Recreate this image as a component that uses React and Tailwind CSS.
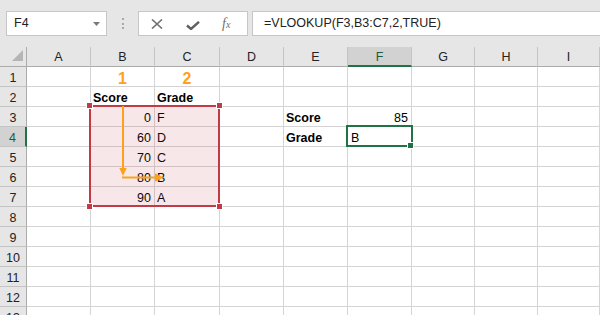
import React from 'react';

const COLS = ['A', 'B', 'C', 'D', 'E', 'F', 'G', 'H', 'I'];
const COL_W = ['w-[64px]', 'w-[64px]', 'w-[65px]', 'w-[64px]', 'w-[64px]', 'w-[64px]', 'w-[63px]', 'w-[63px]', 'w-[62px]'];
const ROWS = [1, 2, 3, 4, 5, 6, 7, 8, 9, 10, 11, 12, 13];

// cell contents keyed by "B3" style refs
const CELLS = {
    B1: { text: '1', kind: 'orange' },
    C1: { text: '2', kind: 'orange' },
    B2: { text: 'Score', kind: 'bold' },
    C2: { text: 'Grade', kind: 'bold' },
    B3: { text: '0', kind: 'num' }, C3: { text: 'F' },
    B4: { text: '60', kind: 'num' }, C4: { text: 'D' },
    B5: { text: '70', kind: 'num' }, C5: { text: 'C' },
    B6: { text: '80', kind: 'num' }, C6: { text: 'B' },
    B7: { text: '90', kind: 'num' }, C7: { text: 'A' },
    E3: { text: 'Score', kind: 'bold' },
    F3: { text: '85', kind: 'num' },
    E4: { text: 'Grade', kind: 'bold' },
    F4: { text: 'B', kind: 'sel' },
};

const cellText = (cell) => {
    if (!cell) return null;
    if (cell.kind === 'orange') {
        return <span className="w-full text-center text-[16px] font-bold text-[#fda11a] leading-[15px]">{cell.text}</span>;
    }
    if (cell.kind === 'num') {
        return <span className="w-full text-right pr-[3px]">{cell.text}</span>;
    }
    if (cell.kind === 'bold') {
        return <span className="pl-[2px] font-bold">{cell.text}</span>;
    }
    if (cell.kind === 'sel') {
        return <span className="pl-[3px]">{cell.text}</span>;
    }
    return <span className="pl-[2px]">{cell.text}</span>;
};

const Toolbar = () => (
    <div className="h-[47px] bg-[#e6e6e6] flex items-start pt-[11px] pl-[6px] overflow-hidden">
        <div className="shrink-0 w-[101px] h-[25px] bg-white border border-[#c6c6c6] flex items-center justify-between pl-[7px] pr-[6px]">
            <span className="text-[12.5px] text-[#222]">F4</span>
            <svg width="7" height="4" viewBox="0 0 7 4"><polygon points="0,0 7,0 3.5,4" fill="#7a7a7a" /></svg>
        </div>
        <div className="shrink-0 w-[31px] h-[25px] flex flex-col items-center justify-center gap-[2.5px] pl-[1px]">
            <div className="w-[2px] h-[2px] bg-[#a8a8a8]"></div>
            <div className="w-[2px] h-[2px] bg-[#a8a8a8]"></div>
            <div className="w-[2px] h-[2px] bg-[#a8a8a8]"></div>
        </div>
        <div className="shrink-0 w-[110px] h-[25px] bg-white border border-[#c6c6c6] flex items-center">
            <svg className="ml-[12px]" width="12" height="10" viewBox="0 0 12 10">
                <path d="M1 0.5 L11 9.5 M11 0.5 L1 9.5" stroke="#707070" strokeWidth="1.6" fill="none" />
            </svg>
            <svg className="ml-[23px] mt-[3px]" width="14" height="9" viewBox="0 0 14 9">
                <path d="M1 4.5 L5 8 L13 0.8" stroke="#606060" strokeWidth="2.4" fill="none" />
            </svg>
            <span className="ml-[22px] text-[14px] italic text-[#707070] font-['Liberation_Serif',serif] leading-none">
                f<span className="text-[10px]">x</span>
            </span>
        </div>
        <div className="shrink-0 ml-[4px] w-[400px] h-[25px] bg-white border border-[#c6c6c6] flex items-center pl-[11px]">
            <span className="text-[12.5px] text-[#222]">=VLOOKUP(F3,B3:C7,2,TRUE)</span>
        </div>
    </div>
);

const HeaderRow = () => (
    <div className="flex h-[20px]">
        <div className="shrink-0 w-[27px] h-[20px] bg-[#e6e6e6] border-r border-b border-[#ababab] relative">
            <svg className="absolute left-[12px] top-[3px]" width="12" height="12" viewBox="0 0 12 12">
                <polygon points="11,0 11,11 0,11" fill="#b5b5b5" />
            </svg>
        </div>
        {COLS.map((c, i) => {
            const selected = c === 'F';
            return (
                <div
                    key={c}
                    className={`shrink-0 ${COL_W[i]} h-[20px] border-r border-[#c4c4c4] flex items-center justify-center pt-[2px] ${selected ? 'bg-[#d2d2d2] border-b-2 border-b-[#217346] text-[#1d5c38]' : 'bg-[#e6e6e6] border-b border-b-[#ababab] text-[#222]'}`}
                >
                    {c}
                </div>
            );
        })}
        <div className="flex-1 bg-[#e6e6e6] border-b border-[#ababab]"></div>
    </div>
);

const SheetRow = ({ r }) => {
    const selectedRow = r === 4;
    return (
        <div className="flex h-[20px]">
            <div
                className={`shrink-0 w-[27px] h-[20px] border-b border-[#c4c4c4] flex items-end justify-center leading-[15px] ${selectedRow ? 'bg-[#d2d2d2] border-r-2 border-r-[#217346] text-[#1d5c38]' : 'bg-[#e6e6e6] border-r border-r-[#ababab] text-[#222]'}`}
            >
                {r}
            </div>
            {COLS.map((c, i) => (
                <div key={c} className={`shrink-0 ${COL_W[i]} h-[20px] border-r border-b border-[#d4d4d4] flex items-end leading-[15px] text-black`}>
                    {cellText(CELLS[`${c}${r}`])}
                </div>
            ))}
            <div className="flex-1 border-b border-[#d4d4d4]"></div>
        </div>
    );
};

const Corner = ({ className }) => (
    <div className={`absolute w-[7px] h-[7px] bg-[#c13a45] border border-white ${className}`}></div>
);

export default function App() {
    return (
        <div className="relative w-[600px] h-[315px] overflow-hidden bg-white font-['Liberation_Sans',Arial,sans-serif] text-[12.5px]">
            <Toolbar />
            <HeaderRow />
            {ROWS.map(r => <SheetRow key={r} r={r} />)}

            {/* lookup range B3:C7 */}
            <div className="absolute left-[89px] top-[105px] w-[131px] h-[102px] border-2 border-[#c13a45] bg-[rgba(193,58,69,0.12)]"></div>
            <Corner className="left-[86px] top-[102px]" />
            <Corner className="left-[216px] top-[102px]" />
            <Corner className="left-[86px] top-[203px]" />
            <Corner className="left-[216px] top-[203px]" />

            {/* arrow */}
            <svg className="absolute left-0 top-0 pointer-events-none" width="600" height="315">
                <line x1="123" y1="106" x2="123" y2="170" stroke="#fda11a" strokeWidth="2" />
                <polygon points="119.3,168 126.7,168 123,176" fill="#fda11a" />
                <line x1="122" y1="177.5" x2="157" y2="177.5" stroke="#fda11a" strokeWidth="2" />
                <polygon points="155,173.3 155,181.7 163.3,177.5" fill="#fda11a" />
            </svg>

            {/* active cell F4 */}
            <div className="absolute left-[346px] top-[125px] w-[67px] h-[22px] border-2 border-[#217346]"></div>
            <div className="absolute left-[407px] top-[142px] w-[7px] h-[7px] bg-[#217346] border border-white"></div>
        </div>
    );
}
